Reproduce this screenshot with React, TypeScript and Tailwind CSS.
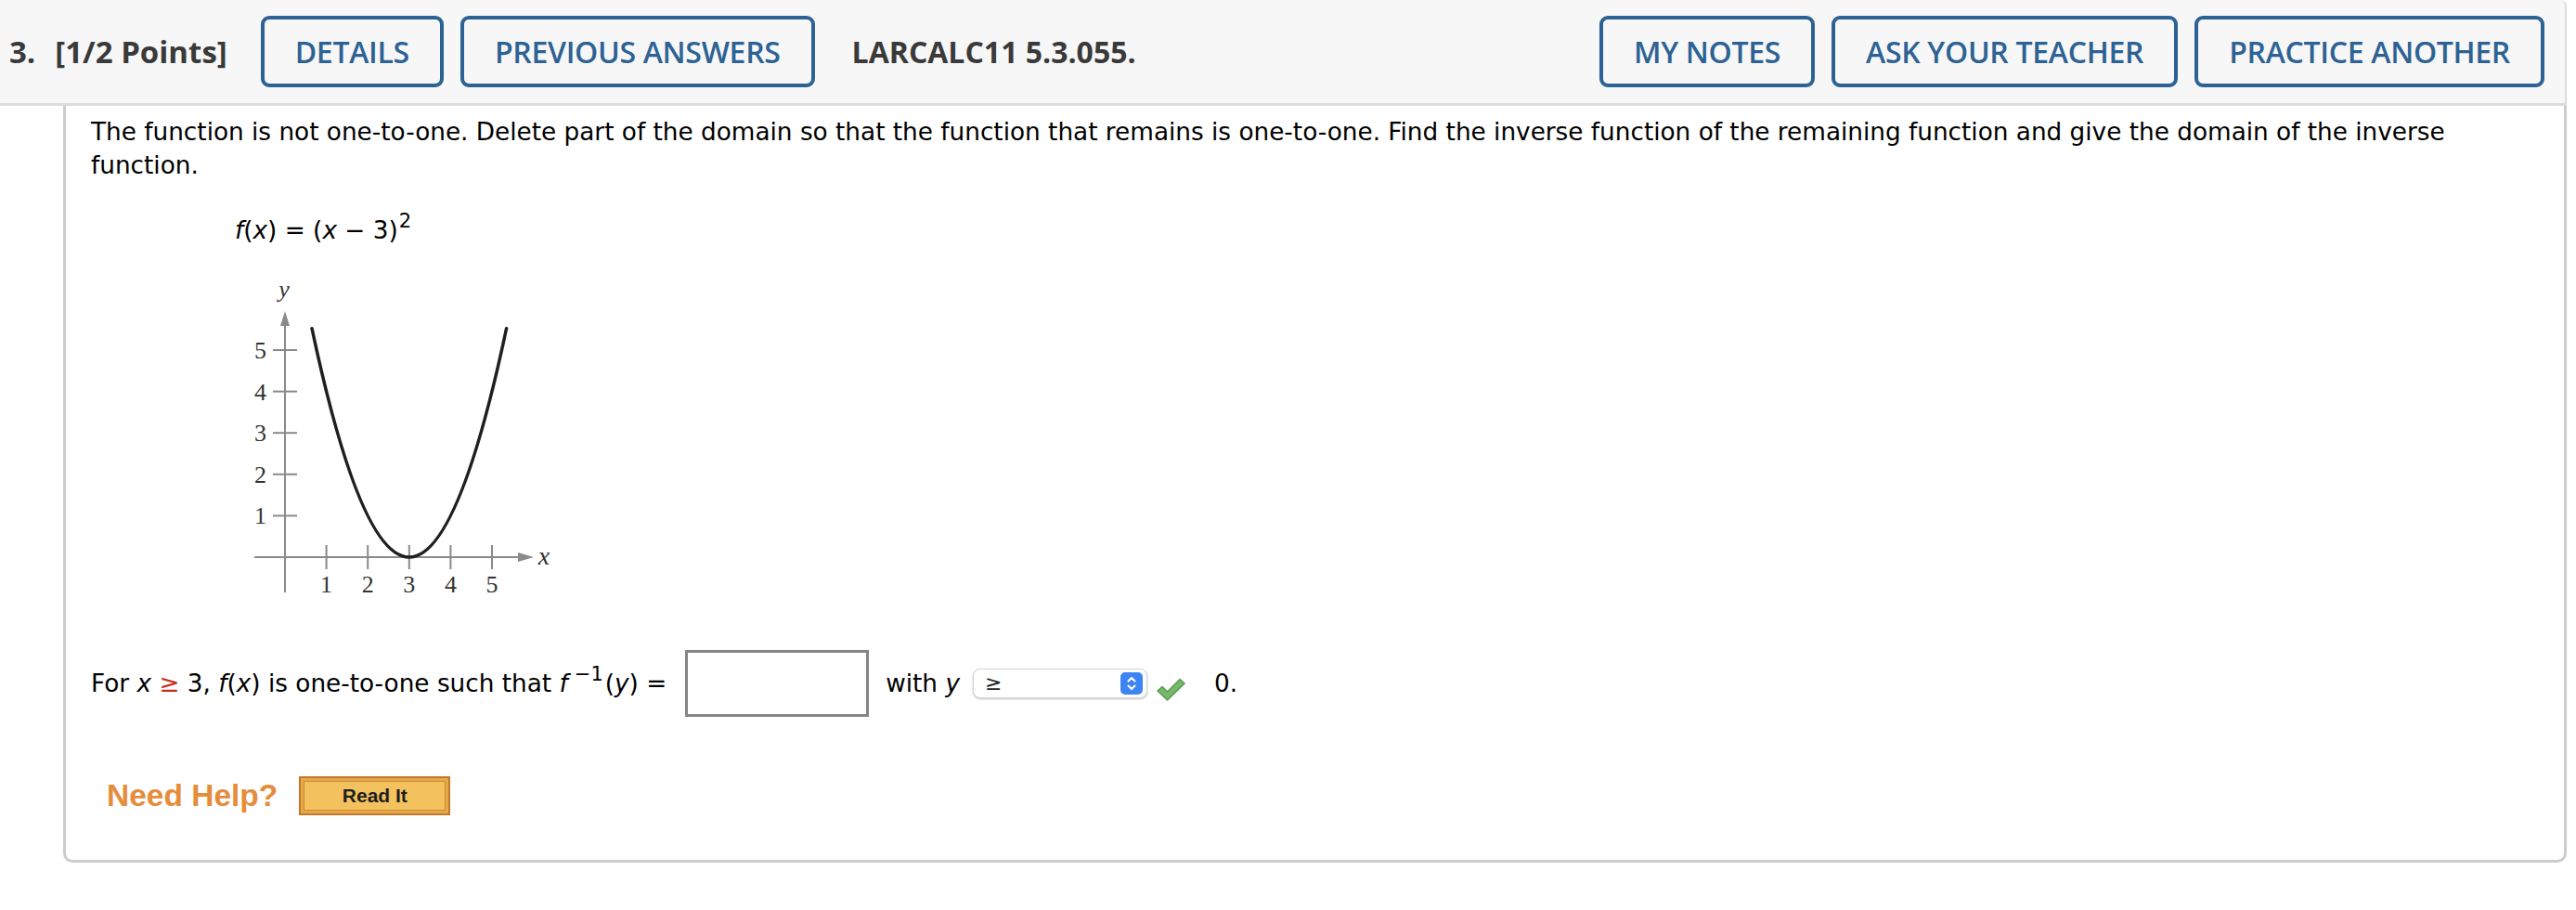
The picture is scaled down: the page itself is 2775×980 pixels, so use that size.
import React from "react"

const headerBtn =
  "h-[77px] px-[33px] flex items-center border-[4px] border-[#2d6294] rounded-[9px] text-[32px] font-semibold text-[#2d6294] tracking-[-0.3px] bg-[#f7f7f7]"

function Graph() {
  const ox = 42
  const oy = 305
  const u = 44.6
  const ticks = [1, 2, 3, 4, 5]
  return (
    <svg width="340" height="355" viewBox="0 0 340 355" className="block ml-[167px] mt-[29px]">
      {/* axes */}
      <line x1={ox} y1={343} x2={ox} y2={52} stroke="#8a8a8a" strokeWidth="2" />
      <polygon points={`${ox},40 ${ox - 5},56 ${ox + 5},56`} fill="#8a8a8a" />
      <line x1={9} y1={oy} x2={296} y2={oy} stroke="#8a8a8a" strokeWidth="2" />
      <polygon points={`310,${oy} 293,${oy - 5} 293,${oy + 5}`} fill="#8a8a8a" />
      {ticks.map((k) => (
        <g key={"y" + k}>
          <line x1={29} y1={oy - u * k} x2={55} y2={oy - u * k} stroke="#8a8a8a" strokeWidth="2" />
          <text
            x={22}
            y={oy - u * k + 9}
            textAnchor="end"
            fontFamily="'Liberation Serif', serif"
            fontSize="26"
            fill="#333"
          >
            {k}
          </text>
        </g>
      ))}
      {ticks.map((k) => (
        <g key={"x" + k}>
          <line x1={ox + u * k} y1={292} x2={ox + u * k} y2={318} stroke="#8a8a8a" strokeWidth="2" />
          <text
            x={ox + u * k}
            y={343}
            textAnchor="middle"
            fontFamily="'Liberation Serif', serif"
            fontSize="26"
            fill="#333"
          >
            {k}
          </text>
        </g>
      ))}
      <text x={41} y={25} textAnchor="middle" fontFamily="'Liberation Serif', serif" fontStyle="italic" fontSize="26" fill="#333">
        y
      </text>
      <text x={321} y={313} textAnchor="middle" fontFamily="'Liberation Serif', serif" fontStyle="italic" fontSize="28" fill="#333">
        x
      </text>
      {/* curve */}
      <path d="M71 58.7 Q175.8 551.3 280.6 58.7" fill="none" stroke="#1f1f1f" strokeWidth="3.5" strokeLinecap="round" />
    </svg>
  )
}

function Select() {
  return (
    <div className="ml-[14px] w-[188px] h-[32px] bg-white border border-[#d6d6d6] rounded-[8px] shadow-[0_1px_2px_rgba(0,0,0,0.25)] flex items-center pl-[12px] pr-[4px]">
      <span className="text-[22px] leading-none text-[#222]">≥</span>
      <div className="ml-auto w-[24px] h-[24px] rounded-[5px] bg-[#3d85f5] flex items-center justify-center">
        <svg width="12" height="18" viewBox="0 0 12 18">
          <path d="M2.5 6.5 L6 3 L9.5 6.5" fill="none" stroke="white" strokeWidth="2" strokeLinecap="round" strokeLinejoin="round" />
          <path d="M2.5 11.5 L6 15 L9.5 11.5" fill="none" stroke="white" strokeWidth="2" strokeLinecap="round" strokeLinejoin="round" />
        </svg>
      </div>
    </div>
  )
}

function Check() {
  return (
    <svg width="33" height="27" viewBox="0 0 33 27" className="ml-[9px] mt-[12px]">
      <path
        d="M2 15 L7 10.5 L12.5 16 L26 2.5 L31 7 L12.5 25 Z"
        fill="#76b86a"
        stroke="#5a9a50"
        strokeWidth="1.5"
        strokeLinejoin="round"
      />
    </svg>
  )
}

export default function App() {
  return (
    <div className="w-[2775px] h-[980px] bg-white overflow-hidden">
      <div className="w-[2765px]">
        {/* header */}
        <div className="h-[114px] bg-[#f7f7f7] border-b-[3px] border-r-[2px] border-[#dcdcdc] rounded-tr-[6px] flex items-center pl-[10px] pr-[22px] font-['Open_Sans',sans-serif]">
          <span className="text-[33px] font-bold text-[#3a3a3a]">3.</span>
          <span className="ml-[21px] text-[33px] font-bold text-[#3a3a3a]">[1/2 Points]</span>
          <div className="ml-[36px] flex gap-[18px]">
            <button className={headerBtn}>DETAILS</button>
            <button className={headerBtn}>PREVIOUS ANSWERS</button>
          </div>
          <span className="ml-[40px] text-[32px] font-bold text-[#3a3a3a]">LARCALC11 5.3.055.</span>
          <div className="ml-auto flex gap-[18px]">
            <button className={headerBtn}>MY NOTES</button>
            <button className={headerBtn}>ASK YOUR TEACHER</button>
            <button className={headerBtn}>PRACTICE ANOTHER</button>
          </div>
        </div>

        {/* question body */}
        <div className="ml-[68px] h-[815px] border-l-[3px] border-r-[3px] border-b-[3px] border-[#cccccc] rounded-b-[10px] pl-[27px] pr-[27px] pt-[10px] font-['DejaVu_Sans',Verdana,sans-serif] text-[26.3px] leading-[36px] text-black">
          <p className="max-w-[2560px]">
            The function is not one-to-one. Delete part of the domain so that the function that remains is one-to-one. Find the inverse function of the remaining function and give the domain of the inverse function.
          </p>
          <p className="mt-[34px] ml-[155px]">
            <i>f</i>(<i>x</i>) = (<i>x</i> − 3)<sup className="text-[21px] top-[-12px] ml-[1px]">2</sup>
          </p>

          <Graph />

          <div className="mt-[50px] h-[72px] flex items-center">
            <span className="whitespace-nowrap">
              For <i>x</i> <span className="text-[#cc2a1e]">≥</span> 3, <i>f</i>(<i>x</i>) is one-to-one such that <i>f</i>
              <sup className="text-[21px] top-[-12px] ml-[7px] mr-[2px]">−1</sup>(<i>y</i>) =
            </span>
            <div className="ml-[20px] w-[198px] h-[72px] border-[3px] border-[#858585] bg-white" />
            <span className="ml-[18px] whitespace-nowrap">
              with <i>y</i>
            </span>
            <Select />
            <Check />
            <span className="ml-[30px]">0.</span>
          </div>

          <div className="mt-[64px] flex items-center ml-[17px]">
            <span className="font-['Liberation_Sans',Arial,sans-serif] font-bold text-[33.5px] leading-none text-[#e58d3c]">
              Need Help?
            </span>
            <div className="ml-[23px] w-[163px] h-[42px] border-2 border-[#bf7a2c] bg-[#e8a848] p-[3px]">
              <div className="w-full h-full border border-[#c88c3a] bg-[#f3c25e] flex items-center justify-center font-['Liberation_Sans',Arial,sans-serif] font-bold text-[21px] text-[#1e1e1e]">
                Read It
              </div>
            </div>
          </div>
        </div>
      </div>
    </div>
  )
}
